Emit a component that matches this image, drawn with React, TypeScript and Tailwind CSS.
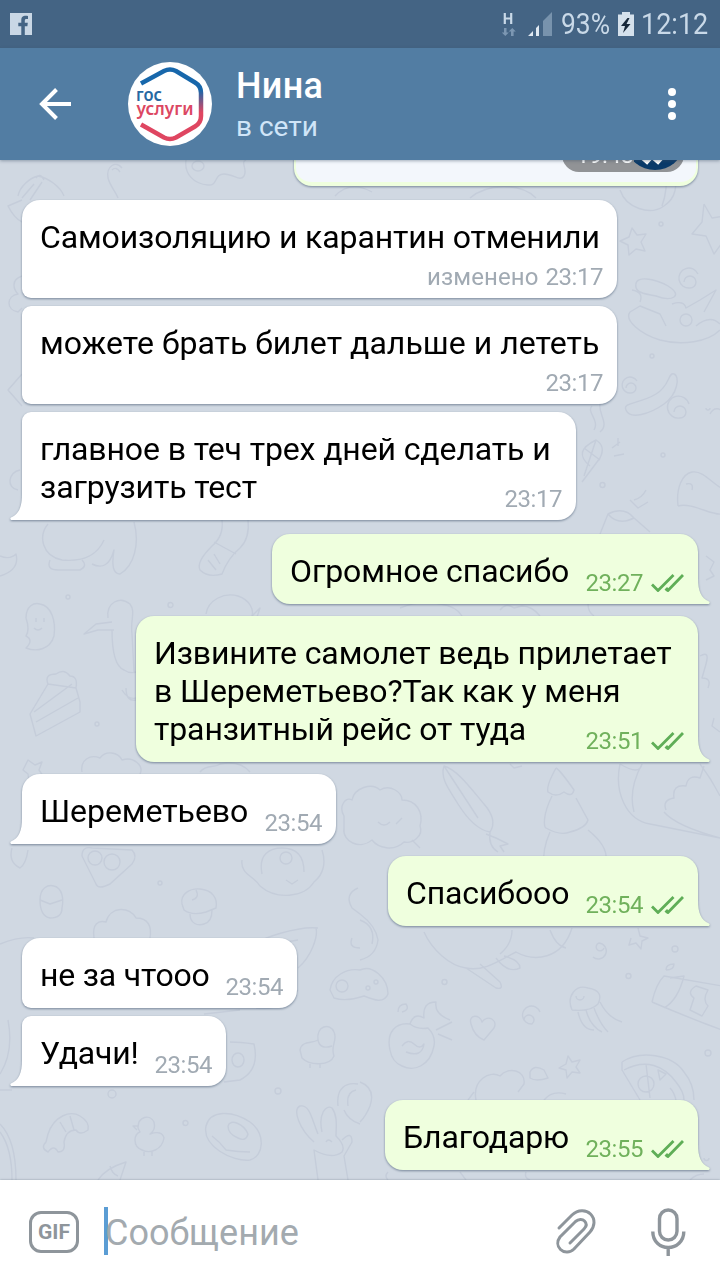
import clsx from "clsx";

type Message = {
  lines: string[];
  time: string;
  edited?: boolean;
  out?: boolean;
  tail?: boolean;
  // size, margin and corner classes
  box: string;
};

const messages: Message[] = [
  {
    lines: ["Самоизоляцию и карантин отменили"],
    time: "23:17",
    edited: true,
    box: "mt-[14px] w-[595px] h-[98px] rounded-[18px] rounded-bl-[9px] tracking-[-0.12px]",
  },
  {
    lines: ["можете брать билет дальше и лететь"],
    time: "23:17",
    box: "mt-2 w-[595px] h-[98px] rounded-[18px] rounded-l-[9px] tracking-[0.03px]",
  },
  {
    lines: ["главное в теч трех дней сделать и", "загрузить тест"],
    time: "23:17",
    tail: true,
    box: "mt-2 w-[554px] h-[108px] rounded-[18px] rounded-tl-[9px] rounded-bl-none tracking-[-0.12px]",
  },
  {
    lines: ["Огромное спасибо"],
    time: "23:27",
    out: true,
    tail: true,
    box: "mt-[14px] w-[426px] h-[70px] rounded-[18px] rounded-br-none tracking-[-0.1px]",
  },
  {
    lines: [
      "Извините самолет ведь прилетает",
      "в Шереметьево?Так как у меня",
      "транзитный рейс от туда",
    ],
    time: "23:51",
    out: true,
    tail: true,
    box: "mt-3 w-[562px] h-[146px] rounded-[18px] rounded-br-none tracking-[-0.12px]",
  },
  {
    lines: ["Шереметьево"],
    time: "23:54",
    tail: true,
    box: "mt-3 w-[314px] h-[70px] rounded-[18px] rounded-bl-none tracking-[-0.05px]",
  },
  {
    lines: ["Спасибооо"],
    time: "23:54",
    out: true,
    tail: true,
    box: "mt-3 w-[310px] h-[70px] rounded-[18px] rounded-br-none tracking-[-0.12px]",
  },
  {
    lines: ["не за чтооо"],
    time: "23:54",
    box: "mt-3 w-[275px] h-[70px] rounded-[18px] rounded-bl-[9px] tracking-[-0.2px]",
  },
  {
    lines: ["Удачи!"],
    time: "23:54",
    tail: true,
    box: "mt-2 w-[204px] h-[70px] rounded-[18px] rounded-tl-[9px] rounded-bl-none tracking-[-0.2px]",
  },
  {
    lines: ["Благодарю"],
    time: "23:55",
    out: true,
    tail: true,
    box: "mt-[14px] w-[313px] h-[70px] rounded-[18px] rounded-br-none tracking-[-0.12px]",
  },
];

// wallpaper line art, in window coordinates
const doodles = [
  // top row
  "M18 196C20 186 30 178 38 176C48 178 60 186 64 196M22 198L34 184M30 200L42 182M36 178Q40 172 44 180",
  "M122 168C116 160 106 166 108 178C110 186 116 192 118 198M112 170Q116 166 120 172",
  "M186 160C184 174 194 184 208 185C218 186 214 174 224 174C234 174 240 182 244 176C248 170 240 162 246 160M192 166a6 5 0 1 0 12 0a6 5 0 1 0-12 0",
  "M335 196Q350 180 372 192M470 198C486 184 520 182 536 198",
  "M620 190C626 208 650 216 664 206C676 198 678 186 674 168M662 206Q668 190 666 168",
  "M632 228l5 7 9-1-5 8 4 9-9-2-7 6-1-10-8-4 9-4z",
  "M704 204l8 14 12-2M704 204l-2 18-10 12 14 2 8 18 10-14",
  "M659 224a2 2 0 1 0 4 0a2 2 0 1 0-4 0M650 356a2 2 0 1 0 4 0a2 2 0 1 0-4 0M661 455a2 2 0 1 0 4 0a2 2 0 1 0-4 0M600 485a2.500 2.500 0 1 0 5 0a2.500 2.500 0 1 0-5 0",
  // bowl of fish
  "M636 284C636 276 654 278 668 286C684 296 672 302 656 296C644 294 634 292 636 284M630 312C624 320 640 334 660 340C682 346 708 342 720 330M630 312L640 306L660 314L666 326M640 302Q644 292 632 290M672 304Q684 300 686 308L700 300L716 290L704 312M680 320a6 6 0 1 0 12 0a6 6 0 1 0-12 0M696 326q14-12 24-2",
  "M684 282a6 6 0 1 1 6 6a10 10 0 1 1 8-14",
  "M626 410C622 402 640 404 656 394C670 386 668 372 674 374C680 376 678 394 664 404C650 414 630 420 626 410",
  "M674 412a6 6 0 1 1 6 6a11 11 0 1 1 9-14M626 388a5 5 0 1 1 5 5a8 8 0 1 1 6-12",
  "M710 414c4-8 12-6 12 0M706 408a2 2 0 1 0 4 0M592 406C586 412 600 420 594 430M600 404C598 414 610 424 600 432",
  "M590 466C578 456 580 448 596 440Q606 446 600 458L582 482M596 440L584 476M584 448L600 460M612 448l8-6m-6 14l10-2m-6-16v8",
  "M678 506C676 488 682 474 692 472C704 470 714 486 722 488M678 506C692 502 712 516 722 514M686 484q8-2 6 6",
  "M600 534L608 514Q624 506 634 518L650 532M608 514Q618 526 634 518M630 500l8 8 10-6m-14-2q8-2 12-10",
  // left side
  "M22 200L8 206Q14 218 22 222M22 276C10 280 14 290 18 294C6 296 6 310 18 312L22 308",
  "M22 374L8 390L22 406M20 470C8 472 6 488 18 490",
  "M48 524C38 536 42 556 62 560C84 562 98 554 104 540M50 560Q46 570 58 570L80 570Q88 566 82 560M92 564Q108 572 114 550Q110 574 120 574C134 566 140 544 134 522M0 556Q10 560 16 554Q20 570 0 576",
  "M222 520Q224 536 212 546Q196 562 200 570Q208 578 222 574Q228 558 240 548Q250 538 248 520M214 542L236 554M208 560l8 10m-2-16l6 10",
  "M26 618C26 606 34 602 40 604C52 606 56 622 54 636C50 650 36 652 26 648Q34 640 26 636Q30 630 26 618M36 618v4m8-4v4M34 628q4 4 8 0",
  "M66 597a2 2 0 1 0 4 0a2 2 0 1 0-4 0M168 605a2.500 2.500 0 1 0 5 0a2.500 2.500 0 1 0-5 0M95 724a2 2 0 1 0 4 0a2 2 0 1 0-4 0",
  "M112 622L96 624L84 634L98 630L114 630M108 618C106 602 120 596 130 604C136 612 130 620 132 634L134 672M112 630C112 646 114 666 124 670Q130 674 136 672",
  "M206 614C208 600 224 592 238 596C250 600 254 610 252 616M252 616l8-8-4 12",
  "M30 714L48 684Q44 674 56 674Q64 668 70 676Q78 676 76 688L80 702L80 712L36 736ZM36 722L78 698M34 712L72 684M48 684L76 688",
  "M122 690q6 10 14 8m-10-10q0 14 10 12M28 760l7 5 7-3-3 8 4 6-8 1-6 5-1-8-5-4z",
  "M82 772C80 760 90 754 100 758C106 750 118 752 122 760C134 756 144 766 140 774M200 772C206 764 216 768 220 764Q240 760 250 772",
  "M12 848Q8 862 20 868Q26 864 28 850M82 856Q82 846 92 848L132 850Q138 856 132 864L110 884Q98 890 96 884ZM88 858a7 7 0 1 0 14 0a7 7 0 1 0-14 0M104 862a8 8 0 1 0 16 0a8 8 0 1 0-16 0",
  "M242 860C240 874 254 876 260 886C276 900 304 898 314 882C324 874 326 862 322 850M262 874C258 854 270 848 282 848C300 848 304 860 304 872M280 858a6 6 0 1 0 12 0a6 6 0 1 0-12 0M286 880l6 4 6-4",
  "M40 900C40 888 48 884 54 886C62 888 64 898 62 908Q62 918 50 918Q40 916 40 900M40 900l10 4 12-4",
  "M182 904C180 894 190 888 200 889C212 890 218 898 216 908L206 912Q192 916 184 910ZM190 914C190 924 198 926 204 924Q212 922 212 910M196 890q4 8-4 10",
  "M94 938C92 924 98 920 106 922C110 906 130 906 136 918C148 918 152 926 150 938",
  "M0 944Q20 936 34 938M298 940L262 946L240 952M316 928C318 936 312 956 298 968M240 952C262 936 300 926 318 928M256 1008Q280 1012 298 990M204 1014L240 1010",
  "M230 1042Q240 1042 254 1044Q260 1070 240 1080L224 1082M232 1060a6 7 0 1 0 12 0a6 7 0 1 0-12 0M8 1020Q14 1052 0 1074M0 1090H12",
  "M300 1050C302 1040 312 1044 318 1040C316 1026 330 1022 334 1032C338 1040 330 1046 334 1056C330 1066 310 1066 302 1058ZM318 1040q2 10 14 6M310 1064v4m10-4v4",
  "M358 888Q344 894 352 908L360 914M352 938q-4 10 8 10M330 990C332 976 346 968 360 970C372 964 388 978 388 994C384 1004 374 1000 364 996Q346 1002 334 998ZM336 986a6 6 0 1 0 12 0a6 6 0 1 0-12 0M366 988a2 2 0 1 0 4 0a2 2 0 1 0-4 0m8-6a2 2 0 1 0 4 0a2 2 0 1 0-4 0",
  // centre band
  "M344 816C338 806 346 796 352 800C354 788 372 782 380 790C390 784 402 792 402 800C416 800 424 812 420 826C424 836 412 844 404 842C394 852 378 848 372 840C360 850 342 842 344 828ZM378 822q6 6 12 0M396 824l6-6M412 840l8 8",
  "M444 766C440 778 448 788 458 804C468 820 478 830 490 832Q498 820 484 804C472 790 458 770 444 766L478 818M486 834l10 4 12 6-8 2 4 6M490 832q-2 14 8 20",
  "M556 768Q560 770 574 790Q572 798 564 792Q556 798 548 792Q546 786 556 768M552 796C542 816 544 828 546 828Q560 836 570 832Q586 828 588 820L576 798M550 832Q542 850 544 866M588 830Q608 846 606 860",
  "M620 764C614 792 626 820 650 824L720 838M620 764Q640 776 642 764M642 764Q628 790 634 812M700 764Q712 780 720 796M666 810q-4-10 8-12q-2-14 12-12q2-12 14-8l4-12M664 812Q676 826 720 838",
  "M424 932C432 950 450 966 466 968C484 972 500 960 516 952C534 962 562 960 572 928M466 968L496 988Q504 990 500 982L480 964M496 958Q508 974 520 968Q520 960 504 956M512 930Q512 944 500 954M550 930Q556 946 566 948",
  "M604 948a4 4 0 1 1-5-5a8 8 0 1 1-6 14M524 1020a5 5 0 1 1 8 4a9 9 0 1 1 8-12M638 928l2 8 8 2-6 3-1 8-5-6-7 2 2-7",
  "M672 949a3 3 0 1 0 6 0a3 3 0 1 0-6 0M626 976a2.500 2.500 0 1 0 5 0a2.500 2.500 0 1 0-5 0M442 982a2.500 2.500 0 1 0 5 0a2.500 2.500 0 1 0-5 0M705 1053a3 3 0 1 0 6 0a3 3 0 1 0-6 0",
  "M360 914Q376 926 378 940Q376 956 360 960M360 920q16 6 12 24",
  "M572 1010C566 996 576 984 588 988C600 990 602 996 598 1004Q590 1012 572 1010M578 1012q4 18 16 18M586 1010q4 16 16 22M594 1008q6 16 14 24M600 1002q8 16 22 20M576 996a4 4 0 1 0 8 0",
  "M652 1002Q656 984 664 976L722 986M652 1002Q680 1014 706 1024L722 1030M670 978L684 976Q678 1000 664 1008M690 1010l4-12q-8-6 2-12l12 4q-6 10 0 16l-6 10zM666 970q0-6 8-6q0 6-8 6",
  "M390 1050C386 1032 396 1022 410 1024Q418 1030 428 1028Q436 1036 434 1046C430 1066 414 1072 402 1066Q392 1062 390 1050M410 1024q4-12 14-6q-2-16 12-16q-2 12 14 18M436 1030l16-8m-14 12l14 6M402 1046q6-8 12-2t10 0q-2 14-18 8M398 1012q0-8 8-8q4 6-4 8",
  "M471 1024C468 1014 480 1014 482 1022C488 1014 498 1020 494 1028L484 1040Q474 1036 471 1024",
  "M568 1056l4 6 8-2-4 7 4 6-8-1-5 6-1-8-7-2 7-4z",
  "M476 1100C472 1080 490 1070 500 1076C508 1066 526 1070 524 1084L518 1092M530 1072q4-8 14-2l4 8q-12 4-18 0zM544 1100q8-10 22-6M468 1100l6-8",
  "M622 1062C640 1050 672 1054 684 1072Q694 1084 694 1100M624 1070C646 1058 664 1066 676 1082Q684 1092 684 1100M622 1062v8L640 1100M646 1064L650 1098M638 1084a8 8 0 1 0 16 0a8 8 0 1 0-16 0M658 1070l8 4-6 6zM670 1088q4 4 6 12",
  // bottom row
  "M108 1094a4 4 0 1 0 8 0a4 4 0 1 0-8 0M275 1091a3 3 0 1 0 6 0a3 3 0 1 0-6 0M183 1123a2.500 2.500 0 1 0 5 0a2.500 2.500 0 1 0-5 0M158 883a2 2 0 1 0 4 0a2 2 0 1 0-4 0",
  "M48 1134C54 1116 70 1110 80 1116Q90 1122 88 1130Q80 1136 76 1130Q66 1130 64 1142Q66 1152 58 1152Q54 1144 48 1152Q40 1148 46 1142ZM60 1122l6 10m4-16l4 14",
  "M138 1128C138 1116 150 1114 154 1122Q156 1130 150 1134Q162 1130 164 1138C162 1150 150 1154 142 1150C132 1146 134 1134 140 1132ZM138 1126l-5 0 4 4M144 1152v4m8-4v4",
  "M206 1126C210 1110 232 1110 250 1122C266 1134 264 1156 250 1160C232 1162 202 1146 206 1126M228 1126C230 1118 244 1124 248 1134Q246 1142 238 1138Q228 1134 228 1126M212 1136q8 6 14 14q12 2 24 2",
  "M0 1124Q16 1140 16 1180M0 1132Q12 1148 12 1180M98 1180Q106 1168 126 1162L120 1180M110 1166q2 8 8 10",
  "M314 1142C300 1130 292 1110 300 1106C310 1104 312 1120 318 1134M322 1132C318 1114 326 1104 332 1108C338 1116 336 1128 336 1136Q346 1146 342 1152Q332 1160 314 1150L318 1180M342 1140Q352 1130 352 1142L344 1156L348 1180M338 1106C336 1088 346 1082 358 1084M344 1110Q348 1120 360 1124M348 1106q-2-14 8-16M326 1142q2-4 6 0",
  "M360 1082Q376 1088 370 1106Q366 1116 360 1122M388 1172q-4 4 0 8M460 1172l6 8m60-8q-2 6 4 8M690 1180q6-6 14-6M704 1158a2.500 2.500 0 1 0 5 0",
  "M400 608Q420 600 440 604Q456 606 462 616M500 610q6-8 14-2l8-2q10 0 18 10M588 604q0 8 6 12M706 556l8 6-4 8 4 6-8 4M700 656q10-6 6 8l-4 14q10 0 6 10M714 718l-2 8 8 6M510 764l4 4 8-2",
];

function StatusBar() {
  return (
    <div className="flex h-12 items-center bg-[#446484] pl-[10px] text-[#c9d9e8]">
      <svg width="22" height="22" viewBox="0 0 22 22">
        <path d="M0 0h22v22H0z" fill="#c9d7e5" />
        <path
          d="M11.300 22v-8.700H8.300V9.700h3V7c0-3.200 1.800-4.300 4.300-4.300.9 0 1.700.1 2.400.2v3h-1.500c-1.300 0-1.700.6-1.700 1.700v2.100h3l-.4 3.600h-2.600V22z"
          fill="#446484"
        />
      </svg>
      <svg className="ml-[470px]" width="52" height="26" viewBox="502 11 52 26">
        <path d="M504.800 13v11M511.200 13v11M504.800 18.500h6.400" stroke="#c9d9e8" strokeWidth="2.200" />
        <path
          d="M504 28h2.500v4.500h2.300l-3.500 3.500-3.500-3.500h2.200zM511 36v-4.500h-2.300l3.600-3.500 3.500 3.500h-2.200V36z"
          fill="#7c97b2"
        />
        <path d="M528 36l5-5v5zM536 36v-8l3-3v11z" fill="#e0e9f2" />
        <path d="M543 36V21l9-9v24z" fill="#7893ad" />
      </svg>
      <div className="ml-[7px] w-[56px]">
        <span className="inline-block origin-left scale-x-[.88] text-[30px] leading-[48px]">93%</span>
      </div>
      <svg width="18" height="26" viewBox="0 0 18 26">
        <path d="M5 1h8v2.500h4V25H1V3.500h4z" fill="#d5e1ec" />
        <path d="M10.500 7L4 15h4l-2 7 7.500-9H9.500l3-6z" fill="#17283a" />
      </svg>
      <div className="ml-[6px] w-[70px]">
        <span className="inline-block origin-left scale-x-[.9] text-[30px] leading-[48px]">12:12</span>
      </div>
    </div>
  );
}

function Avatar() {
  return (
    <svg width="84" height="84" viewBox="0 0 84 84">
      <defs>
        <linearGradient id="ring" gradientUnits="userSpaceOnUse" x1="0" y1="7" x2="0" y2="77">
          <stop offset="0.3" stopColor="#1767ab" />
          <stop offset="0.62" stopColor="#df4661" />
        </linearGradient>
      </defs>
      <circle cx="42" cy="42" r="42" fill="#fff" />
      <path
        d="M13 21.500L36 9Q42 6 48 9L67 20.500Q73 24 73 31V54Q73 61 67 64.500L48 75.500Q42 78.500 36 75.500L13 62.500"
        fill="none"
        stroke="url(#ring)"
        strokeWidth="4.500"
      />
      <text x="8" y="38.500" fontSize="18" fontWeight="600" fontFamily="Noto Sans, sans-serif" textLength="26" lengthAdjust="spacingAndGlyphs" fill="#2768a2">
        гос
      </text>
      <text x="8.500" y="52.500" fontSize="18" fontWeight="600" fontFamily="Noto Sans, sans-serif" textLength="57" lengthAdjust="spacingAndGlyphs" fill="#dc4763">
        услуги
      </text>
    </svg>
  );
}

function Header() {
  return (
    <header className="relative flex h-[112px] items-center bg-[#527da3] shadow-[0_1px_3px_rgba(60,80,100,0.45)]">
      <svg className="ml-[38px]" width="36" height="36" viewBox="0 0 36 36" fill="none" stroke="#fff" strokeWidth="4">
        <path d="M33 18H5M18.500 3.500L4 18l14.500 14.500" />
      </svg>
      <div className="ml-[54px]">
        <Avatar />
      </div>
      <div className="ml-6 flex-1">
        <h1 className="mt-[2px] text-[36px] leading-[42px] font-medium tracking-[0.3px] text-white">Нина</h1>
        <p className="text-[28px] leading-[39px] text-[#d0e5f8]">в сети</p>
      </div>
      <div className="mr-11 flex flex-col gap-1">
        <span className="size-2 rounded-full bg-white" />
        <span className="size-2 rounded-full bg-white" />
        <span className="size-2 rounded-full bg-white" />
      </div>
    </header>
  );
}

function Tail({ out }: { out?: boolean }) {
  return (
    <svg
      className={clsx("absolute bottom-0", out ? "-right-3 -scale-x-100" : "-left-3")}
      width="14"
      height="26"
      viewBox="0 0 14 26"
    >
      <path d="M14 0H12C12 13 9 20 1 23.500C-.2 24.500.2 26 2 26H14Z" fill={out ? "#efffde" : "#fff"} />
    </svg>
  );
}

function Bubble({ message }: { message: Message }) {
  const { lines, time, edited, out, tail, box } = message;
  return (
    <div
      className={clsx(
        "relative grid shrink-0 pt-[18px] pr-[14px] pl-[18px] drop-shadow-[0_1px_1px_rgba(60,80,105,0.6)]",
        out ? "mr-[22px] self-end bg-[#efffde]" : "ml-[22px] self-start bg-white",
        box
      )}
    >
      {tail && <Tail out={out} />}
      <div className="col-start-1 row-start-1 text-[32px] leading-[38px] whitespace-nowrap text-black">
        {lines.map((line) => (
          <p key={line}>{line}</p>
        ))}
      </div>
      <div
        className={clsx(
          "col-start-1 row-start-1 mb-[7px] flex items-center self-end justify-self-end text-[24px] leading-[28px]",
          out ? "text-[#70b15c]" : "text-[#a1aab3]"
        )}
      >
        {edited && <span className="mr-[7px] tracking-[0.1px]">изменено</span>}
        <span className="tracking-[-0.45px]">{time}</span>
        {out && (
          <svg className="ml-2" width="33" height="18" viewBox="0 0 33 18" fill="none" stroke="#5fae57" strokeWidth="2.800">
            <path d="M1 10.500l6 6L22.500 1M14.500 16.500L17 14M16 17.500L32 1" />
          </svg>
        )}
      </div>
    </div>
  );
}

function PhotoBubble() {
  return (
    <div className="-mt-[34px] mr-[22px] flex h-[60px] w-[404px] shrink-0 items-start justify-end self-end rounded-b-[18px] border-2 border-t-0 border-b-4 border-[#efffde] bg-[#f3f7fc] pr-3 drop-shadow-[0_1px_1px_rgba(60,80,105,0.6)]">
      <div className="mt-3 flex h-[34px] w-[122px] items-center justify-between overflow-hidden rounded-full bg-[#919396] pl-[14px] text-[24px] leading-[28px] tracking-[-0.45px] text-white">
        <span>19:48</span>
        <svg width="50" height="34" viewBox="0 0 50 34">
          <ellipse cx="21" cy="9" rx="27" ry="23" fill="#0a3a69" />
          <path d="M5 17l8 7 8-9M17 18l7 6 9-10" fill="none" stroke="#fff" strokeWidth="4" />
        </svg>
      </div>
    </div>
  );
}

function Wallpaper() {
  return (
    <svg
      className="absolute inset-0"
      width="720"
      height="1020"
      viewBox="0 160 720 1020"
      fill="none"
      stroke="#c5cdda"
      strokeWidth="1.400"
      strokeLinejoin="round"
    >
      {doodles.map((d) => (
        <path key={d} d={d} />
      ))}
    </svg>
  );
}

function InputBar() {
  return (
    <footer className="relative flex h-[100px] items-center bg-white shadow-[0_0_2px_rgba(90,105,120,0.6)]">
      <div className="mt-[3px] ml-[29px] flex h-[42px] w-[50px] items-center justify-center rounded-[12px] border-3 border-[#8e959b] pt-0.5 text-[21px] font-bold text-[#8e959b]">
        GIF
      </div>
      <div className="mt-[2px] ml-[25px] flex h-12 flex-1 items-center">
        <span className="h-12 w-1 bg-[#5b9dd4]" />
        <span className="-ml-[3px] pt-[3px] text-[36px] leading-[48px] text-[#a3aaaf]">Сообщение</span>
      </div>
      <svg className="mt-1 mr-[50px]" width="48" height="52" viewBox="552 1206 48 52" fill="none" stroke="#8e959b" strokeWidth="3" strokeLinecap="round">
        <path d="M559 1228L572 1215C578 1209.500 586 1209.500 590.500 1214C595.500 1219 595 1226.500 590 1232L574 1249C570 1253 564 1253 560.500 1249.500C557 1246 557 1241 560 1237L575.500 1221.500C578.500 1219 582.500 1219 584.500 1221C587 1223.500 586.500 1226.500 584 1229L570 1243" />
      </svg>
      <svg className="mt-1 mr-[34px]" width="36" height="52" viewBox="650 1206 36 52" fill="none" stroke="#8e959b" strokeWidth="3.400">
        <rect x="659.500" y="1210" width="17.500" height="30" rx="8.750" />
        <path d="M652.800 1231.500C652.800 1241.500 660 1247.500 668.200 1247.500S683.800 1241.500 683.800 1231.500M668.200 1248V1256" />
      </svg>
    </footer>
  );
}

export default function App() {
  return (
    <div className="flex h-[1280px] w-[720px] flex-col overflow-hidden font-[Roboto,sans-serif]">
      <div className="relative z-10">
        <StatusBar />
        <Header />
      </div>
      <main className="relative flex h-[1020px] flex-col overflow-hidden bg-[#d0d8e2]">
        <Wallpaper />
        <PhotoBubble />
        {messages.map((message, i) => (
          <Bubble key={i} message={message} />
        ))}
      </main>
      <InputBar />
    </div>
  );
}
